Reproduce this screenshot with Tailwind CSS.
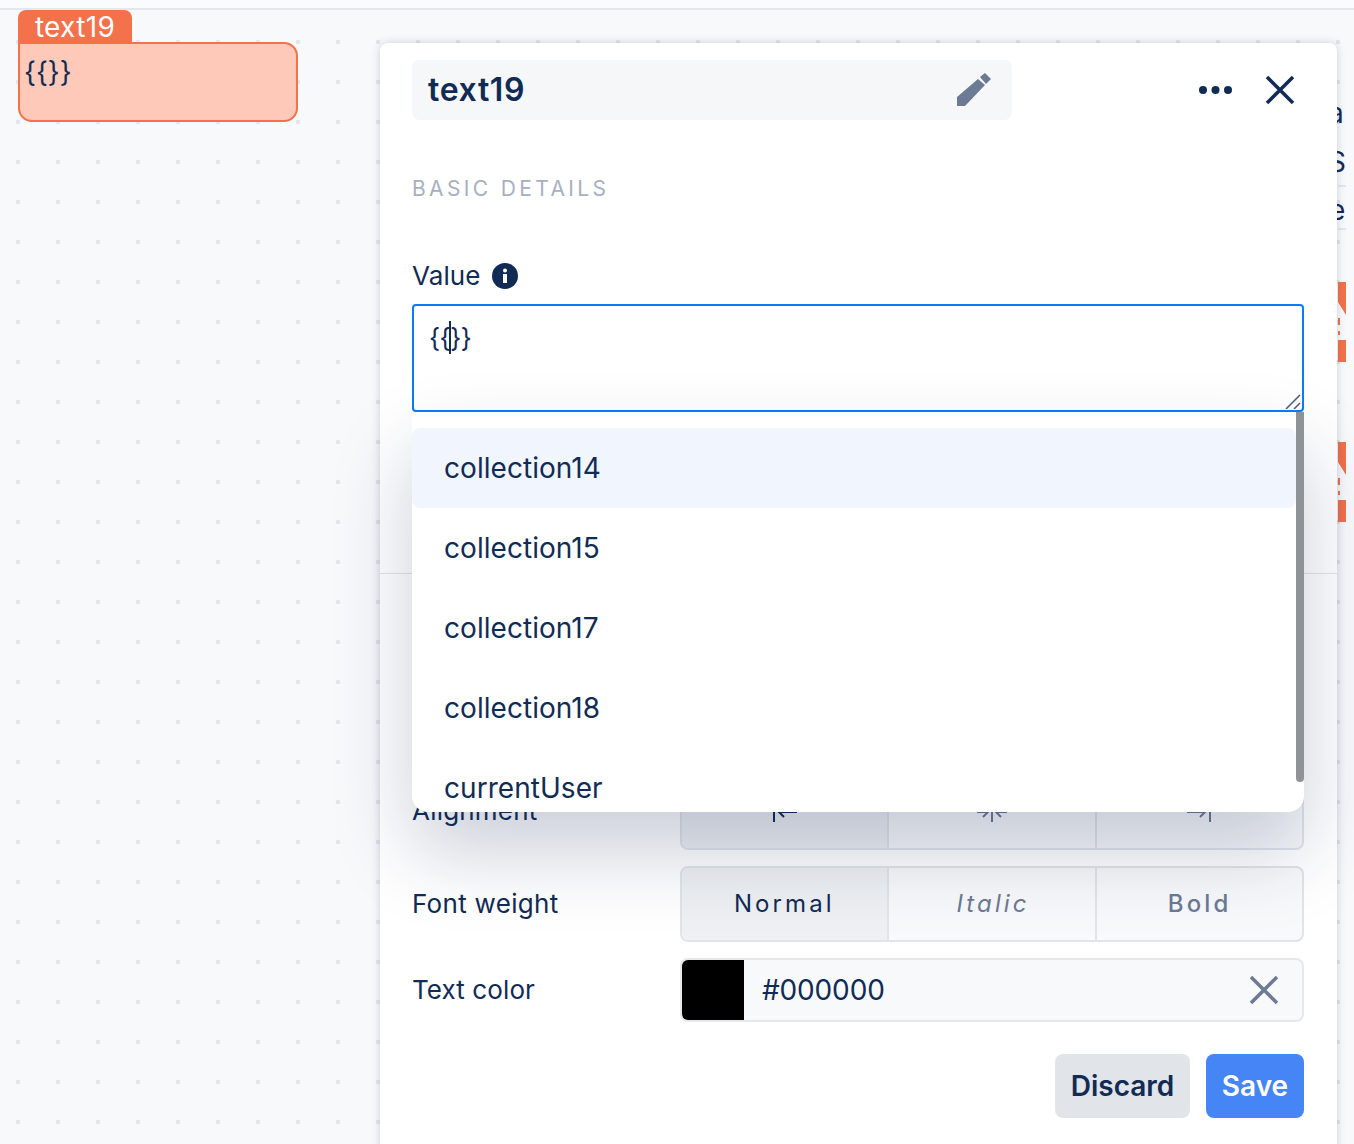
<!DOCTYPE html>
<html lang="en">

<head>
  <meta charset="UTF-8">
  <title>text19</title>
  <script src="https://cdn.jsdelivr.net/npm/@tailwindcss/browser@4"></script>
</head>

<body>
  <div class="relative w-[1354px] h-[1144px] overflow-hidden bg-[#f8f9fb] font-['Inter',sans-serif] text-[#112b55]">
    <!-- top bar -->
    <div class="h-[10px] bg-[#fafbfc] border-b-2 border-[#e4e7ec]"></div>

    <!-- canvas -->
    <div class="h-[1134px] bg-[radial-gradient(circle,#e3e5ea_2px,transparent_2.5px)] bg-size-[40px_40px] bg-position-[-2px_12px]"></div>

    <!-- node -->
    <div class="absolute left-[18px] top-[10px] w-[280px]">
      <div class="w-[114px] h-[33px] bg-[#f3714b] rounded-t-lg text-white text-[28px] tracking-[0.3px] leading-[35px] text-center">text19</div>
      <div class="-mt-px h-[80px] bg-[#fec9b8] border-2 border-[#f3714b] rounded-b-[14px] rounded-tr-[14px] px-[4px] pt-[8px] text-[28px] leading-[40px]">{{}}</div>
    </div>

    <!-- canvas items behind the panel -->
    <span class="absolute left-[1328px] top-[96px] text-[28px] leading-[34px]">a</span>
    <span class="absolute left-[1328px] top-[145px] text-[28px] leading-[34px]">S</span>
    <span class="absolute left-[1329px] top-[193px] text-[28px] leading-[34px]">e</span>
    <div class="absolute left-[1338px] top-[185px] w-[8px] h-[2px] bg-[#e4e7ec]"></div>
    <div class="absolute left-[1338px] top-[228px] w-[8px] h-[2px] bg-[#e4e7ec]"></div>
    <svg class="absolute left-[1338px] top-[282px]" width="8" height="80" viewBox="0 0 8 80" fill="#f3714b">
      <path d="M0 0h8v33L0 20z" />
      <rect x="0" y="36" width="2" height="7" />
      <rect x="0" y="49" width="2" height="4" />
      <rect x="0" y="58" width="8" height="22" />
    </svg>
    <svg class="absolute left-[1338px] top-[442px]" width="8" height="80" viewBox="0 0 8 80" fill="#f3714b">
      <path d="M0 0h8v33L0 20z" />
      <rect x="0" y="36" width="2" height="7" />
      <rect x="0" y="49" width="2" height="4" />
      <rect x="0" y="58" width="8" height="22" />
    </svg>

    <!-- inspector panel -->
    <div class="absolute left-[380px] top-[43px] w-[957px] h-[1120px] bg-white rounded-lg shadow-[0_0_8px_rgba(40,60,100,0.22)] pl-[32px] pr-[33px] pt-[17px]">
      <div class="flex items-center h-[60px]">
        <div class="flex items-center justify-between w-[600px] h-[60px] bg-[#f6f7f9] rounded-lg pl-[16px] pr-[21px]">
          <span class="text-[32px] font-semibold tracking-[0.65px]">text19</span>
          <svg width="34" height="34" viewBox="0 0 34 34" fill="#6c7a94">
            <path d="M0 24L21 6l7 6L8 33H0z" />
            <path d="M23 4l5-4 6 6-5 5z" />
          </svg>
        </div>
        <svg class="ml-auto" width="34" height="10" viewBox="0 0 34 10" fill="#112b55">
          <circle cx="5" cy="5" r="4" />
          <circle cx="17.5" cy="5" r="4" />
          <circle cx="30" cy="5" r="4" />
        </svg>
        <svg class="ml-[33px] mr-[9px]" width="30" height="30" viewBox="0 0 30 30" stroke="#112b55" stroke-width="3.5" fill="none">
          <path d="M2 2l26 26M28 2L2 28" />
        </svg>
      </div>

      <div class="mt-[56px] h-[24px] text-[21px] leading-[26px] tracking-[0.16em] text-[#a8afc0]">BASIC DETAILS</div>

      <div class="mt-[60px] h-[32px] flex items-center gap-[11px] text-[26px] leading-[30px]">
        <span class="pb-[1px] tracking-[0.1px]">Value</span>
        <svg width="26" height="26" viewBox="0 0 26 26">
          <circle cx="13" cy="13" r="13" fill="#112b55" />
          <circle cx="13" cy="7.5" r="2" fill="#fff" />
          <rect x="11" y="11" width="4" height="9" fill="#fff" />
        </svg>
      </div>

      <div class="relative mt-[12px] h-[108px]">
        <textarea class="block w-full h-[108px] resize-none border-2 border-[#0d7bf5] rounded-[4px] outline-none pl-[15px] pr-[16px] py-[12px] text-[26px] leading-[40px] text-[#112b55] tracking-[-0.02em]">{{}}</textarea>
        <div class="absolute left-[37px] top-[17px] w-[2px] h-[33px] bg-[#112b55]"></div>
        <svg class="absolute right-[3px] bottom-[3px]" width="16" height="15" viewBox="0 0 16 15" fill="none" stroke="#4a5a78" stroke-width="1.5">
          <path d="M1 15L15 1M9 15l6-6" />
        </svg>
      </div>

      <div class="-ml-[32px] -mr-[33px] mt-[161px] h-[1px] bg-[#e2e5ea]"></div>

      <!-- style rows -->
      <div class="mt-[200px] flex flex-col gap-[16px] text-[26px] leading-[30px]">
        <div class="flex items-center h-[76px]">
          <span class="w-[268px] pb-[2px] tracking-[0.2px]">Alignment</span>
          <div class="flex w-[624px] h-[76px] border-2 border-[#e1e4e9] rounded-lg bg-[#f8f9fb] overflow-hidden divide-x-2 divide-[#e1e4e9]">
            <div class="flex-1 flex items-center justify-center bg-[#eef0f3]">
              <svg width="26" height="20" viewBox="0 0 26 20" fill="none" stroke="#112b55" stroke-width="2">
                <path d="M2 0v20M25 10H7M12 5l-5 5 5 5" />
              </svg>
            </div>
            <div class="flex-1 flex items-center justify-center">
              <svg width="30" height="20" viewBox="0 0 30 20" fill="none" stroke="#6c7a94" stroke-width="2">
                <path d="M15 0v20M0 10h10M6 5l5 5-5 5M30 10H20M24 5l-5 5 5 5" />
              </svg>
            </div>
            <div class="flex-1 flex items-center justify-center">
              <svg width="26" height="20" viewBox="0 0 26 20" fill="none" stroke="#6c7a94" stroke-width="2">
                <path d="M24 0v20M1 10h18M14 5l5 5-5 5" />
              </svg>
            </div>
          </div>
        </div>

        <div class="flex items-center h-[76px]">
          <span class="w-[268px] tracking-[0.3px]">Font weight</span>
          <div class="flex w-[624px] h-[76px] border-2 border-[#e1e4e9] rounded-lg bg-[#f8f9fb] overflow-hidden divide-x-2 divide-[#e1e4e9] text-[24px] tracking-[0.13em]">
            <div class="flex-1 flex items-center justify-center bg-[#eef0f3]">Normal</div>
            <div class="flex-1 flex items-center justify-center italic text-[#6c7a94] pl-[2px]">Italic</div>
            <div class="flex-1 flex items-center justify-center font-medium text-[#6c7a94]">Bold</div>
          </div>
        </div>

        <div class="flex items-center h-[64px]">
          <span class="w-[268px] tracking-[0.1px]">Text color</span>
          <div class="flex items-center w-[624px] h-[64px] border-2 border-[#e6e8ec] rounded-lg bg-[#f8f9fb] overflow-hidden">
            <div class="w-[62px] h-full bg-black"></div>
            <span class="ml-[18px] text-[28px] tracking-[-0.15px]">#000000</span>
            <svg class="ml-auto mr-[23px]" width="30" height="30" viewBox="0 0 30 30" stroke="#6c7a94" stroke-width="3.5" fill="none">
              <path d="M2 2l26 26M28 2L2 28" />
            </svg>
          </div>
        </div>
      </div>

      <div class="mt-[32px] flex justify-end gap-[16px] text-[28px] font-semibold">
        <button class="h-[64px] w-[135px] bg-[#e1e4e8] rounded-lg">Discard</button>
        <button class="h-[64px] w-[98px] bg-[#4585f6] text-white rounded-lg">Save</button>
      </div>

      <!-- variable suggestions dropdown -->
      <div class="absolute left-[32px] top-[369px] w-[892px] h-[400px] bg-white rounded-b-[16px] overflow-hidden shadow-[0_40px_80px_rgba(20,35,80,0.22)] pt-[16px] pr-[8px] text-[28px] tracking-[0.05px]">
        <div class="h-[80px] flex items-center px-[32px] bg-[#f0f5fe] rounded-lg">collection14</div>
        <div class="h-[80px] flex items-center px-[32px]">collection15</div>
        <div class="h-[80px] flex items-center px-[32px]">collection17</div>
        <div class="h-[80px] flex items-center px-[32px]">collection18</div>
        <div class="h-[80px] flex items-center px-[32px]">currentUser</div>
        <div class="absolute right-0 top-0 w-[8px] h-[370px] bg-[#8f9297] rounded-b-full"></div>
      </div>
    </div>
  </div>
</body>

</html>
